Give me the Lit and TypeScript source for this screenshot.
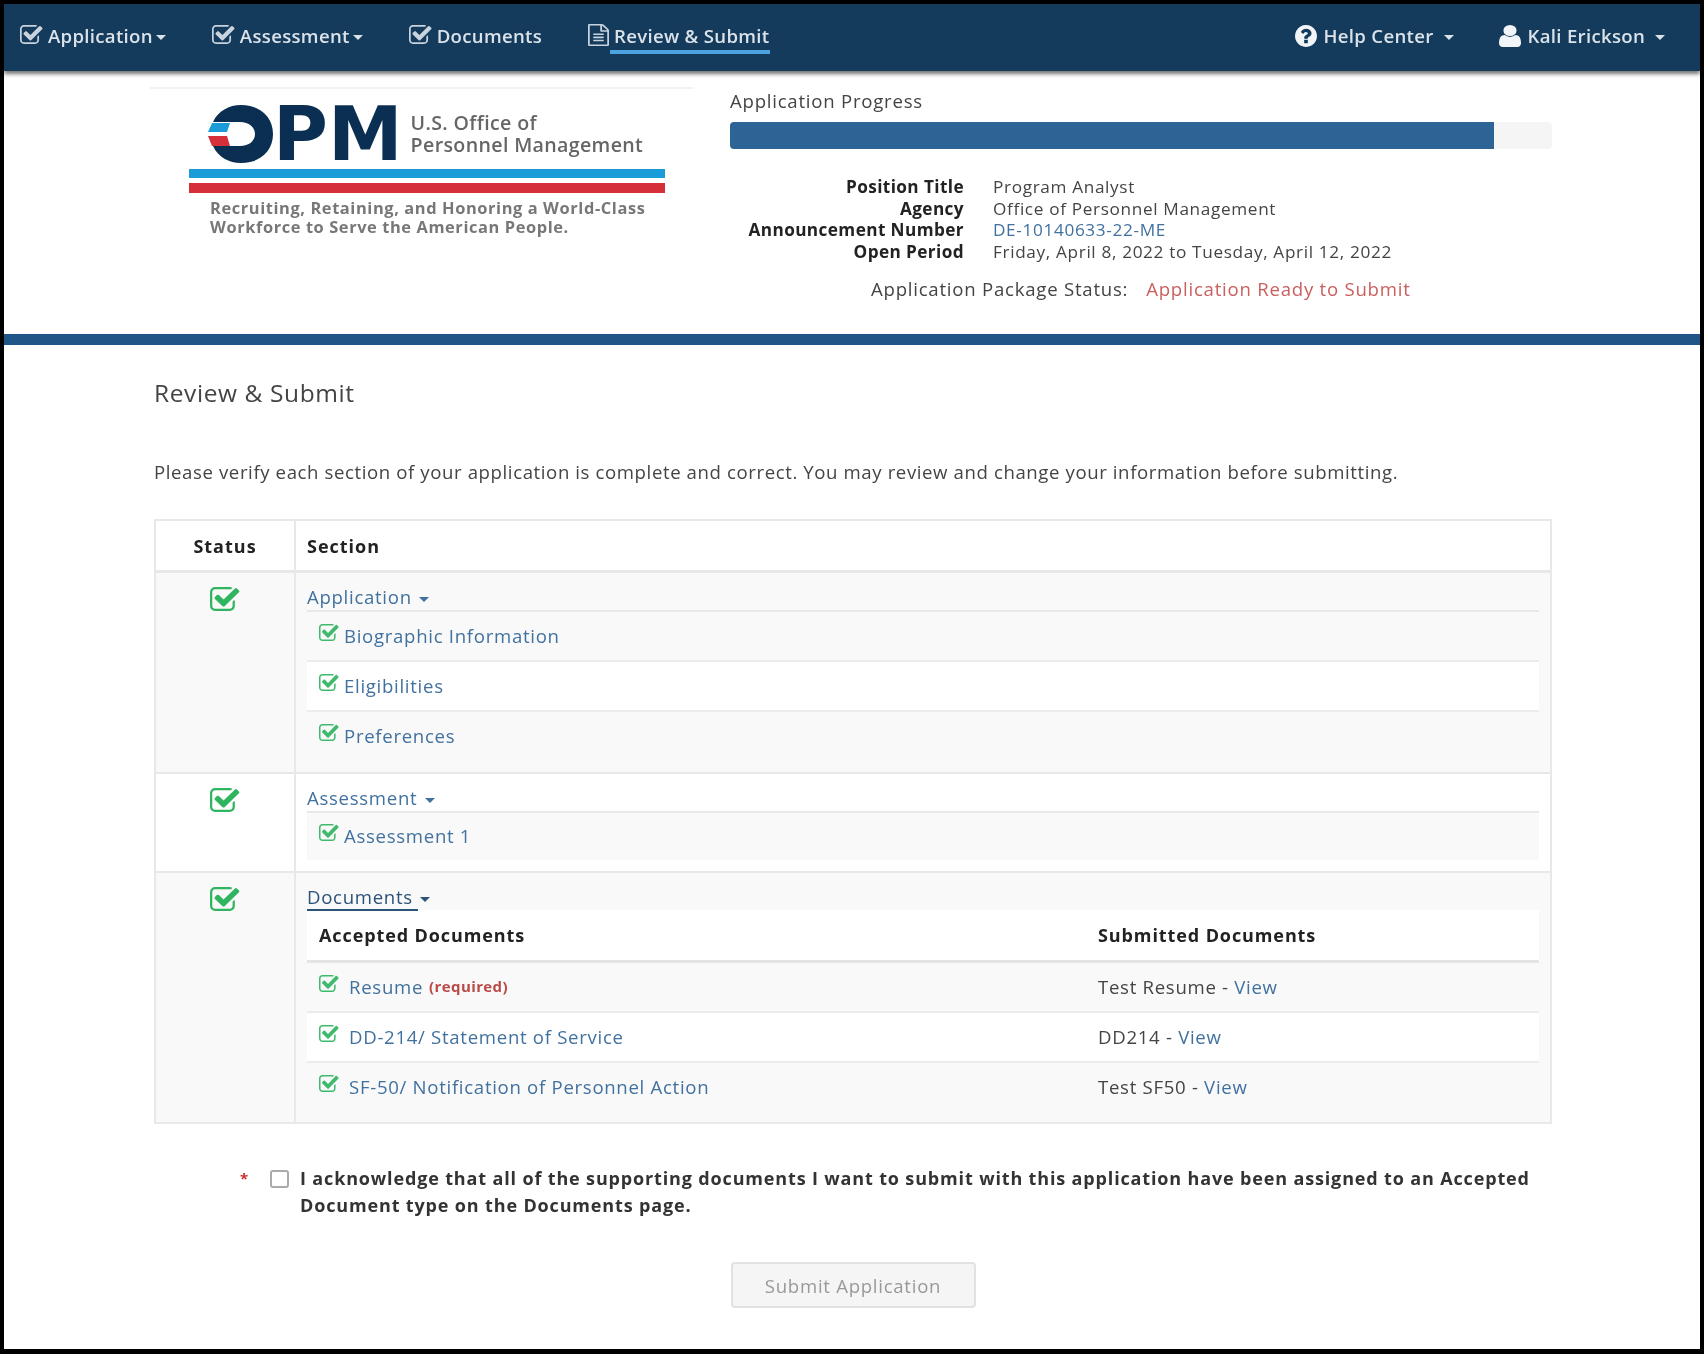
import { LitElement, html, css, svg } from 'lit';
import { customElement } from 'lit/decorators.js';

const checkPath =
  'M1472 930v318q0 119-84.5 203.5t-203.5 84.5h-832q-119 0-203.5-84.5t-84.5-203.5v-832q0-119 84.5-203.5t203.5-84.5h832q63 0 117 25 15 7 18 23 3 17-9 29l-49 49q-10 10-23 10-3 0-9-2-23-6-45-6h-832q-66 0-113 47t-47 113v832q0 66 47 113t113 47h832q66 0 113-47t47-113v-254q0-13 9-22l64-64q10-10 23-10 6 0 12 3 20 8 20 29zm231-489l-814 814q-24 24-57 24t-57-24l-430-430q-24-24-24-57t24-57l110-110q24-24 57-24t57 24l263 263 647-647q24-24 57-24t57 24l110 110q24 24 24 57t-24 57z';
const filePath =
  'M1596 380q28 28 48 76t20 88v1152q0 40-28 68t-68 28h-1344q-40 0-68-28t-28-68v-1600q0-40 28-68t68-28h896q40 0 88 20t76 48zm-444-244v376h376q-10-29-22-41l-313-313q-12-12-41-22zm384 1528v-1024h-416q-40 0-68-28t-28-68v-416h-768v1536h1280zm-1024-864q0-14 9-23t23-9h704q14 0 23 9t9 23v64q0 14-9 23t-23 9h-704q-14 0-23-9t-9-23v-64zm736 224q14 0 23 9t9 23v64q0 14-9 23t-23 9h-704q-14 0-23-9t-9-23v-64q0-14 9-23t23-9h704zm0 256q14 0 23 9t9 23v64q0 14-9 23t-23 9h-704q-14 0-23-9t-9-23v-64q0-14 9-23t23-9h704z';
const helpPath =
  'M1024 1376v-192q0-14-9-23t-23-9h-192q-14 0-23 9t-9 23v192q0 14 9 23t23 9h192q14 0 23-9t9-23zm256-672q0-88-55.5-163t-138.5-116-170-41q-243 0-371 213-15 24 8 42l132 100q7 6 19 6 16 0 25-12 53-68 86-92 34-24 86-24 48 0 85.5 26t37.5 59q0 38-20 61t-68 45q-63 28-115.5 86.5t-52.5 125.5v36q0 14 9 23t23 9h192q14 0 23-9t9-23q0-19 21.5-49.5t54.5-49.5q32-18 49-28.5t46-35 44.5-48 28-60.5 12.5-81zm384 192q0 209-103 385.5t-279.5 279.5-385.5 103-385.5-103-279.5-279.5-103-385.5 103-385.5 279.5-279.5 385.5-103 385.5 103 279.5 279.5 103 385.5z';
const userPath =
  'M1536 1399q0 109-62.5 187t-150.5 78h-854q-88 0-150.5-78t-62.5-187q0-85 8.5-160.5t31.5-152 58.5-131 94-89 134.5-34.5q131 128 313 128t313-128q76 0 134.5 34.5t94 89 58.5 131 31.5 152 8.5 160.5zm-256-887q0 159-112.5 271.5t-271.5 112.5-271.5-112.5-112.5-271.5 112.5-271.5 271.5-112.5 271.5 112.5 112.5 271.5z';

const icon = (cls: string, viewBox: string, d: string) => html`
  <svg class=${cls} viewBox=${viewBox} preserveAspectRatio="none" fill="currentColor">
    ${svg`<path d=${d}></path>`}
  </svg>
`;
const check = (cls: string) => icon(cls, '64 128 1700 1408', checkPath);

@customElement('app-root')
export class AppRoot extends LitElement {
  static override styles = css`
    :host {
      display: block;
      width: 1704px;
      height: 1354px;
      box-sizing: border-box;
      background: #000;
      padding: 4px 4px 5px 4px;
      font-family: 'Open Sans', 'Noto Sans', sans-serif;
      font-size: 17.2px;
      color: #444;
    }
    .page {
      background: #fff;
      height: 100%;
      overflow: hidden;
      filter: blur(0.5px);
    }

    /* top bar */
    nav {
      position: relative;
      height: 67px;
      background: #143a5c;
      box-shadow: 0 3px 4px rgba(0, 0, 0, 0.55);
      display: flex;
      align-items: center;
      padding: 0 35px 0 16px;
      color: #dbe3ea;
      font-size: 18.6px;
      font-weight: 600;
      letter-spacing: 0.3px;
    }
    .nav-item {
      display: flex;
      align-items: center;
      gap: 5px;
      margin-right: 46px;
      height: 40px;
    }
    .nav-item span {
      margin-top: -4px;
      line-height: 26px;
    }
    .nav-right {
      margin-left: auto;
      display: flex;
    }
    .nav-right .nav-item {
      margin-right: 45px;
    }
    .nav-right .nav-item:last-child {
      margin-right: 0;
    }
    .nav-ic {
      width: 23px;
      height: 19px;
      color: #c8d3dd;
      margin-top: -6px;
    }
    .nav-file {
      width: 21px;
      height: 22px;
      color: #c8d3dd;
      margin-top: -6px;
    }
    .nav-solid {
      width: 22px;
      height: 22px;
      color: #f2f5f7;
      margin: -4px 2px 0 0;
    }
    .caret {
      display: inline-block;
      width: 0;
      height: 0;
      border-left: 5.5px solid transparent;
      border-right: 5.5px solid transparent;
      border-top: 5.5px solid currentColor;
      margin-left: -2px;
    }
    .nav-right .caret {
      margin-left: 5px;
    }
    .nav-item.current span {
      margin-top: 2px;
      margin-left: -4px;
      padding: 0 1px 1px 4px;
      border-bottom: 4px solid #4da3e0;
    }

    /* header with logo and progress */
    .top {
      display: flex;
      padding-left: 146px;
      border-bottom: 11px solid #1f5687;
      height: 274px;
      box-sizing: border-box;
    }
    .logo {
      width: 543px;
      margin-top: 16px;
      border-top: 2px solid #f2f2f2;
      height: 180px;
      padding: 15px 0 0 39px;
      box-sizing: border-box;
    }
    .logo-row {
      display: flex;
      align-items: center;
      height: 60px;
      padding-left: 17px;
    }
    .logo-o {
      width: 68px;
      height: 60px;
      flex: none;
    }
    .logo-pm {
      font-family: 'DejaVu Sans', sans-serif;
      font-weight: 700;
      font-size: 75px;
      line-height: 60px;
      color: #0b2f52;
      margin-left: -1px;
    }
    .logo-name {
      margin-left: 8px;
      font-size: 19.6px;
      line-height: 22px;
      font-weight: 600;
      color: #666;
      white-space: nowrap;
      letter-spacing: 0.35px;
    }
    .stripe {
      width: 476px;
      height: 9px;
      margin-top: 5px;
      background: #1a9cd8;
    }
    .stripe.red {
      height: 10px;
      background: #d5303a;
    }
    .tagline {
      margin: 5px 0 0 21px;
      font-size: 16.4px;
      line-height: 19px;
      font-weight: 700;
      color: #777;
      white-space: nowrap;
      letter-spacing: 0.6px;
    }
    .info {
      width: 822px;
      margin-left: 37px;
      padding-top: 18px;
    }
    .info-title {
      line-height: 24px;
      font-size: 18.6px;
      letter-spacing: 0.76px;
    }
    .bar {
      height: 27px;
      margin-top: 9px;
      background: #f5f5f5;
      border-radius: 4px;
      overflow: hidden;
    }
    .bar div {
      height: 100%;
      background: #2c6496;
    }
    .facts {
      display: grid;
      grid-template-columns: 234px 1fr;
      column-gap: 29px;
      margin-top: 27px;
      line-height: 21.7px;
      letter-spacing: 0.65px;
    }
    .facts b {
      text-align: right;
      color: #222;
      letter-spacing: 0.4px;
    }
    .pkg {
      display: flex;
      gap: 18px;
      margin-top: 14px;
      padding-left: 141px;
      line-height: 24px;
      font-size: 18.6px;
      letter-spacing: 0.76px;
    }
    .pkg em {
      font-style: normal;
      color: #c9605f;
    }

    /* main */
    main {
      margin: 0 148px 0 150px;
    }
    h1 {
      margin: 33px 0 0;
      font-size: 24.5px;
      line-height: 30px;
      font-weight: 400;
      letter-spacing: 0.6px;
      color: #444;
    }
    .intro {
      margin: 52px 0 0;
      line-height: 24px;
      font-size: 18.6px;
      letter-spacing: 0.6px;
    }
    a {
      color: #41719f;
      text-decoration: none;
    }

    .table {
      margin-top: 35px;
      border: 2px solid #e8e8e8;
      font-size: 18.6px;
      letter-spacing: 0.7px;
    }
    .tr {
      display: grid;
      grid-template-columns: 140px 1fr;
    }
    .tr + .tr {
      border-top: 2px solid #e8e8e8;
    }
    .tr.head {
      height: 49px;
      border-bottom: 1px solid #e8e8e8;
      font-size: 18px;
      letter-spacing: 1px;
      font-weight: 700;
      color: #222;
      align-items: center;
    }
    .tr.head .st {
      text-align: center;
      align-items: center;
    }
    .st {
      border-right: 2px solid #e8e8e8;
      align-self: stretch;
      display: flex;
      justify-content: center;
    }
    .tr.odd {
      background: #f9f9f9;
    }
    .sec {
      padding: 11px 11px 11px 11px;
      min-width: 0;
    }
    .tr.head .sec {
      padding: 0 11px;
    }
    .st-ic {
      width: 30px;
      height: 24px;
      margin-top: 14px;
      color: #2fb55f;
    }
    .group {
      display: block;
      line-height: 26px;
      height: 26px;
      border-bottom: 2px solid #e8e8e8;
    }
    .group .caret {
      margin-left: 2px;
      vertical-align: middle;
    }
    .sub {
      box-sizing: border-box;
      padding: 0 0 2px 12px;
      display: flex;
      align-items: center;
      background: #fff;
      border-bottom: 2px solid #ececec;
      height: 50px;
    }
    .sub:last-child {
      border-bottom: 0;
      height: 49px;
    }
    .group + .sub:last-child {
      height: 47px;
    }
    .sub.alt {
      background: #f9f9f9;
    }
    .sub-ic {
      width: 20px;
      height: 17px;
      color: #3fb96c;
      margin: -6px 5px 0 0;
      flex: none;
    }
    .doc-head {
      display: grid;
      grid-template-columns: 779px 1fr;
      align-items: center;
      height: 50px;
      background: #fff;
      padding-left: 12px;
      border-bottom: 3px solid #e4e4e4;
      font-size: 18px;
      letter-spacing: 0.9px;
      font-weight: 700;
      color: #222;
      margin-top: 2px;
    }
    .doc {
      display: grid;
      grid-template-columns: 779px 1fr;
      align-items: center;
      box-sizing: border-box;
      height: 50px;
      padding: 0 0 2px 12px;
      background: #fff;
      border-bottom: 2px solid #ececec;
    }
    .doc:last-child {
      border-bottom: 0;
      height: 48px;
    }
    .doc.alt {
      background: #f9f9f9;
    }
    .doc-name {
      display: flex;
      align-items: center;
    }
    .doc-name .sub-ic {
      margin-right: 10px;
    }
    .req {
      margin-left: 6px;
      font-size: 15px;
      letter-spacing: 0.4px;
      font-weight: 700;
      color: #b94a48;
    }
    .docs-link {
      color: #2c5278;
      border: 0;
      height: 24px;
    }
    .docs-link span {
      border-bottom: 2px solid #2c5278;
    }

    .ack {
      display: flex;
      margin-top: 41px;
      padding-left: 86px;
      font-weight: 700;
      color: #333;
      line-height: 27px;
      font-size: 18px;
      letter-spacing: 0.85px;
    }
    .star {
      width: 30px;
      color: #c9302c;
      font-size: 15px;
    }
    .box {
      width: 15px;
      height: 14px;
      flex: none;
      margin: 5px 11px 0 0;
      border: 2px solid #aaa;
      border-radius: 3px;
    }
    .submit {
      display: block;
      width: 245px;
      height: 46px;
      margin: 43px auto 0;
      background: #f5f5f5;
      border: 2px solid #e2e2e2;
      border-radius: 4px;
      font: inherit;
      color: #999;
      font-size: 18.6px;
      letter-spacing: 0.72px;
    }
  `;

  private nav(icn: unknown, label: string, caret = true, extra = '') {
    return html`<div class="nav-item ${extra}">
      ${icn}<span>${label}</span>${caret ? html`<i class="caret"></i>` : ''}
    </div>`;
  }

  private sub(label: string, alt: boolean) {
    return html`<div class="sub ${alt ? 'alt' : ''}">${check('sub-ic')}<a>${label}</a></div>`;
  }

  private doc(label: string, req: boolean, file: string, alt: boolean) {
    return html`<div class="doc ${alt ? 'alt' : ''}">
      <div class="doc-name">
        ${check('sub-ic')}<a>${label}</a>${req ? html`<span class="req">(required)</span>` : ''}
      </div>
      <div>${file} - <a>View</a></div>
    </div>`;
  }

  override render() {
    return html`
      <div class="page">
        <nav>
          ${this.nav(check('nav-ic'), 'Application')}
          ${this.nav(check('nav-ic'), 'Assessment')}
          ${this.nav(check('nav-ic'), 'Documents', false)}
          ${this.nav(icon('nav-file', '128 0 1536 1792', filePath), 'Review & Submit', false, 'current')}
          <div class="nav-right">
            ${this.nav(icon('nav-solid', '128 128 1536 1536', helpPath), 'Help Center')}
            ${this.nav(icon('nav-solid', '256 128 1280 1536', userPath), 'Kali Erickson')}
          </div>
        </nav>

        <section class="top">
          <div class="logo">
            <div class="logo-row">
              <svg class="logo-o" viewBox="0 0 68 60">
                <path
                  fill="#0b2f52"
                  d="M7 18C12 7 23 1 35 1c19 0 32 12 32 29s-13 29-32 29c-12 0-23-6-28-17h27c9 0 15-5 15-12s-6-12-15-12z"
                ></path>
                <path fill="#1a9cd8" d="M6 19H24L21 28H2Z"></path>
                <path fill="#d5303a" d="M2 32H21L24 42H6Z"></path>
              </svg>
              <span class="logo-pm">PM</span>
              <div class="logo-name">U.S. Office of<br />Personnel Management</div>
            </div>
            <div class="stripe"></div>
            <div class="stripe red"></div>
            <div class="tagline">
              Recruiting, Retaining, and Honoring a World-Class<br />Workforce to Serve the American People.
            </div>
          </div>

          <div class="info">
            <div class="info-title">Application Progress</div>
            <div class="bar"><div style="width: ${(764 / 822) * 100}%"></div></div>
            <div class="facts">
              <b>Position Title</b><span>Program Analyst</span>
              <b>Agency</b><span>Office of Personnel Management</span>
              <b>Announcement Number</b><a>DE-10140633-22-ME</a>
              <b>Open Period</b><span>Friday, April 8, 2022 to Tuesday, April 12, 2022</span>
            </div>
            <div class="pkg">
              <span>Application Package Status:</span><em>Application Ready to Submit</em>
            </div>
          </div>
        </section>

        <main>
          <h1>Review &amp; Submit</h1>
          <p class="intro">
            Please verify each section of your application is complete and correct. You may review and change your
            information before submitting.
          </p>

          <div class="table">
            <div class="tr head">
              <div class="st">Status</div>
              <div class="sec">Section</div>
            </div>

            <div class="tr odd">
              <div class="st">${check('st-ic')}</div>
              <div class="sec">
                <a class="group">Application <i class="caret"></i></a>
                ${this.sub('Biographic Information', true)} ${this.sub('Eligibilities', false)}
                ${this.sub('Preferences', true)}
              </div>
            </div>

            <div class="tr">
              <div class="st">${check('st-ic')}</div>
              <div class="sec">
                <a class="group">Assessment <i class="caret"></i></a>
                ${this.sub('Assessment 1', true)}
              </div>
            </div>

            <div class="tr odd">
              <div class="st">${check('st-ic')}</div>
              <div class="sec">
                <a class="group docs-link"><span>Documents </span><i class="caret"></i></a>
                <div class="doc-head"><span>Accepted Documents</span><span>Submitted Documents</span></div>
                ${this.doc('Resume', true, 'Test Resume', true)}
                ${this.doc('DD-214/ Statement of Service', false, 'DD214', false)}
                ${this.doc('SF-50/ Notification of Personnel Action', false, 'Test SF50', true)}
              </div>
            </div>
          </div>

          <div class="ack">
            <span class="star">*</span>
            <span class="box"></span>
            <span
              >I acknowledge that all of the supporting documents I want to submit with this application have been
              assigned to an Accepted<br />Document type on the Documents page.</span
            >
          </div>

          <button class="submit">Submit Application</button>
        </main>
      </div>
    `;
  }
}
